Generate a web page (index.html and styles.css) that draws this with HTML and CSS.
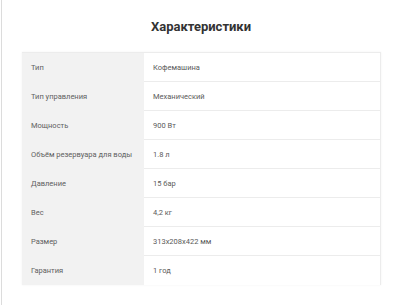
FILE: index.html
```html
<!DOCTYPE html>
<html lang="ru">
<head>
<meta charset="utf-8">
<link rel="stylesheet" href="styles.css">
</head>
<body>
<div class="page">
  <h2 class="title">Характеристики</h2>
  <table class="specs">
    <tr><td class="k">Тип</td><td class="v">Кофемашина</td></tr>
    <tr><td class="k">Тип управления</td><td class="v">Механический</td></tr>
    <tr><td class="k">Мощность</td><td class="v">900 Вт</td></tr>
    <tr><td class="k">Объём резервуара для воды</td><td class="v">1.8 л</td></tr>
    <tr><td class="k">Давление</td><td class="v">15 бар</td></tr>
    <tr><td class="k">Вес</td><td class="v">4,2 кг</td></tr>
    <tr><td class="k">Размер</td><td class="v">313x208x422 мм</td></tr>
    <tr><td class="k">Гарантия</td><td class="v">1 год</td></tr>
  </table>
</div>
</body>
</html>
```
FILE: styles.css
```css
html, body { margin: 0; padding: 0; background: #fff; }
body { font-family: Roboto, "Noto Sans", sans-serif; }
.page {
  margin-left: 1px;
  border-left: 1px solid #dcdcdc;
  height: 305px;
  box-sizing: border-box;
  padding: 17px 20px 0 20px;
}
.title {
  margin: 0 0 16px 0;
  text-align: center;
  font-size: 13px;
  font-weight: 700;
  color: #333;
  line-height: 19px;
  height: 19px;
}
.specs {
  width: 359px;
  table-layout: fixed;
  border-collapse: collapse;
  box-shadow: 0 0 2px rgba(0,0,0,0.06);
  font-size: 7.5px;
  color: #5a5a5a;
}
.specs td {
  height: 29px;
  padding: 0 9px;
  border-bottom: 1px solid #ececec;
  vertical-align: middle;
  box-sizing: border-box;
  white-space: nowrap;
}
.specs tr:first-child td { border-top: 1px solid #ececec; }
.specs tr:last-child td { border-bottom: none; }
.specs .k { width: 122px; background: #f2f2f2; border-bottom-color: #f2f2f2; color: #606060; }
.specs .v { border-right: 1px solid #ececec; }
```
